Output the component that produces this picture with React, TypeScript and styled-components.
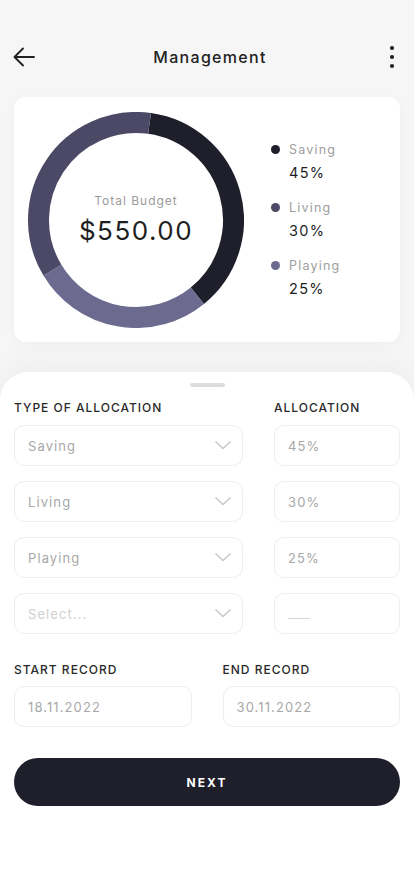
import React from "react";
import styled, { createGlobalStyle } from "styled-components";

const Global = createGlobalStyle`
  html, body { margin: 0; padding: 0; background: #f6f6f6; }
  body { font-family: Inter, "Noto Sans", "Liberation Sans", sans-serif; -webkit-font-smoothing: antialiased; }
  * { box-sizing: border-box; }
`;

const Screen = styled.div`
  width: 414px;
  height: 896px;
  display: flex;
  flex-direction: column;
  background: #f6f6f6;
  overflow: hidden;
`;

const Header = styled.header`
  margin-top: 35px;
  height: 44px;
  padding: 0 10px 0 12px;
  display: flex;
  align-items: center;
  justify-content: space-between;
`;

const IconButton = styled.button`
  width: 24px;
  height: 24px;
  border: 0;
  padding: 0;
  background: transparent;
  display: flex;
  align-items: center;
  justify-content: center;
  color: #222;
`;

const Title = styled.h1`
  margin: 0;
  font-size: 16px;
  font-weight: 500;
  letter-spacing: 1.3px;
  color: #222;
  padding-left: 4px;
`;

const Card = styled.section`
  margin: 18px 14px 0;
  height: 245px;
  background: #fff;
  border-radius: 12px;
  box-shadow: 0 4px 16px rgba(0, 0, 0, 0.03);
  display: flex;
  align-items: center;
  padding: 0 14px;
  gap: 27px;
`;

const Donut = styled.div`
  position: relative;
  width: 216px;
  height: 216px;
  flex-shrink: 0;
`;

const DonutCenter = styled.div`
  position: absolute;
  inset: 0;
  display: flex;
  flex-direction: column;
  align-items: center;
  justify-content: center;
`;

const CenterLabel = styled.span`
  font-size: 12px;
  letter-spacing: 1px;
  color: #9b9b9b;
  line-height: 16px;
`;

const CenterValue = styled.span`
  margin-top: 6px;
  font-size: 26px;
  letter-spacing: 1.5px;
  color: #1f1f1f;
  line-height: 32px;
`;

const Legend = styled.div`
  display: flex;
  flex-direction: column;
  gap: 18px;
`;

const LegendItem = styled.div`
  display: grid;
  grid-template-columns: 9px auto;
  column-gap: 9px;
  row-gap: 6px;
  align-items: center;
`;

const Dot = styled.span<{ $color: string }>`
  width: 9px;
  height: 9px;
  border-radius: 50%;
  background: ${(p) => p.$color};
`;

const LegendName = styled.span`
  font-size: 12.5px;
  letter-spacing: 1.2px;
  color: #9d9d9d;
  line-height: 16px;
`;

const LegendValue = styled.span`
  grid-column: 2;
  font-size: 14.5px;
  letter-spacing: 1.3px;
  color: #1f1f1f;
  line-height: 18px;
`;

const Sheet = styled.section`
  margin-top: 30px;
  flex: 1;
  background: #fff;
  border-radius: 28px 28px 0 0;
  box-shadow: 0 -10px 26px rgba(0, 0, 0, 0.035);
  padding: 11px 14px 0;
  display: flex;
  flex-direction: column;
`;

const Handle = styled.div`
  width: 35px;
  height: 4px;
  border-radius: 2px;
  background: #dddddd;
  align-self: center;
`;

const AllocGrid = styled.div`
  margin-top: 13px;
  display: grid;
  grid-template-columns: 229px 126px;
  column-gap: 31px;
  row-gap: 15px;
`;

const DateGrid = styled.div`
  margin-top: 28px;
  display: grid;
  grid-template-columns: 1fr 1fr;
  column-gap: 31px;
`;

const FieldLabel = styled.label<{ $gap?: number }>`
  font-size: 12px;
  font-weight: 500;
  letter-spacing: 1px;
  color: #2a2a2a;
  line-height: 16px;
  text-transform: uppercase;
  margin-bottom: ${(p) => p.$gap ?? 0}px;
`;

const Column = styled.div`
  display: flex;
  flex-direction: column;
  gap: 8px;
`;

const Field = styled.div<{ $muted?: boolean }>`
  height: 41px;
  border: 1px solid #eeeeee;
  border-radius: 10px;
  padding: 0 11px 0 13px;
  display: flex;
  align-items: center;
  justify-content: space-between;
  font-size: 13px;
  letter-spacing: 1.1px;
  color: ${(p) => (p.$muted ? "#cfcfcf" : "#a8a8a8")};
`;

const Blank = styled.span`
  width: 22px;
  height: 1px;
  margin-top: 10px;
  background: #d6d6d6;
`;

const NextButton = styled.button`
  margin-top: 31px;
  height: 48px;
  border: 0;
  border-radius: 24px;
  background: #1f1e2b;
  color: #fff;
  font-family: inherit;
  font-size: 12px;
  font-weight: 700;
  letter-spacing: 2px;
`;

const Chevron = () => (
  <svg width="16" height="9" viewBox="0 0 16 9" fill="none">
    <path d="M1 1l7 6.5L15 1" stroke="#c8c8c8" strokeWidth="1.6" strokeLinecap="round" strokeLinejoin="round" />
  </svg>
);

const R = 97.5;
const C = 108;
const pt = (deg: number) => {
  const a = ((deg - 90) * Math.PI) / 180;
  return `${C + R * Math.cos(a)} ${C + R * Math.sin(a)}`;
};
const arc = (s: number, e: number) =>
  `M ${pt(s)} A ${R} ${R} 0 ${e - s > 180 ? 1 : 0} 1 ${pt(e)}`;

const segments = [
  { color: "#1f1e2b", s: 8, e: 141 },
  { color: "#6c6b8f", s: 141, e: 239 },
  { color: "#4b4965", s: 239, e: 368 },
];

const legend = [
  { name: "Saving", value: "45%", color: "#1f1e2b" },
  { name: "Living", value: "30%", color: "#4b4965" },
  { name: "Playing", value: "25%", color: "#6c6b8f" },
];

const rows = [
  { type: "Saving", alloc: "45%" },
  { type: "Living", alloc: "30%" },
  { type: "Playing", alloc: "25%" },
];

export default function App() {
  return (
    <Screen>
      <Global />
      <Header>
        <IconButton aria-label="Back">
          <svg width="22" height="20" viewBox="0 0 22 20" fill="none">
            <path d="M21 10H2M10 1.5L1.5 10 10 18.5" stroke="#222" strokeWidth="1.9" strokeLinecap="round" strokeLinejoin="round" />
          </svg>
        </IconButton>
        <Title>Management</Title>
        <IconButton aria-label="More">
          <svg width="6" height="24" viewBox="0 0 6 24">
            <circle cx="3" cy="3" r="2.1" fill="#222" />
            <circle cx="3" cy="12" r="2.1" fill="#222" />
            <circle cx="3" cy="21" r="2.1" fill="#222" />
          </svg>
        </IconButton>
      </Header>

      <Card>
        <Donut>
          <svg width="216" height="216" viewBox="0 0 216 216">
            {segments.map((g) => (
              <path key={g.color} d={arc(g.s, g.e)} stroke={g.color} strokeWidth="21" fill="none" />
            ))}
          </svg>
          <DonutCenter>
            <CenterLabel>Total Budget</CenterLabel>
            <CenterValue>$550.00</CenterValue>
          </DonutCenter>
        </Donut>
        <Legend>
          {legend.map((l) => (
            <LegendItem key={l.name}>
              <Dot $color={l.color} />
              <LegendName>{l.name}</LegendName>
              <LegendValue>{l.value}</LegendValue>
            </LegendItem>
          ))}
        </Legend>
      </Card>

      <Sheet>
        <Handle />
        <AllocGrid>
          <FieldLabel $gap={-6}>Type of allocation</FieldLabel>
          <FieldLabel $gap={-6}>Allocation</FieldLabel>
          {rows.map((r) => (
            <React.Fragment key={r.type}>
              <Field>
                {r.type}
                <Chevron />
              </Field>
              <Field>{r.alloc}</Field>
            </React.Fragment>
          ))}
          <Field $muted>
            Select...
            <Chevron />
          </Field>
          <Field>
            <Blank />
          </Field>
        </AllocGrid>
        <DateGrid>
          <Column>
            <FieldLabel>Start record</FieldLabel>
            <Field>18.11.2022</Field>
          </Column>
          <Column>
            <FieldLabel>End record</FieldLabel>
            <Field>30.11.2022</Field>
          </Column>
        </DateGrid>
        <NextButton>NEXT</NextButton>
      </Sheet>
    </Screen>
  );
}
